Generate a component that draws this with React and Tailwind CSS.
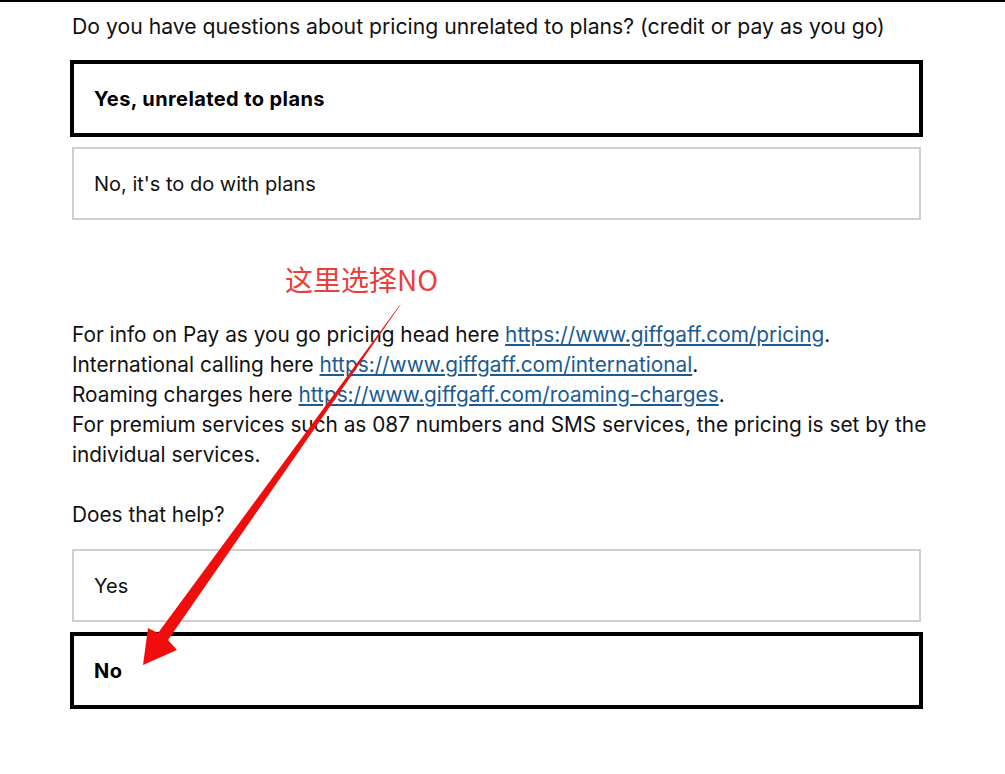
import React from "react";

const links = {
  pricing: "https://www.giffgaff.com/pricing",
  international: "https://www.giffgaff.com/international",
  roaming: "https://www.giffgaff.com/roaming-charges",
};

function Option({ label, selected }) {
  if (selected) {
    return (
      <button className="flex h-[77px] w-full items-center border-4 border-black bg-white px-5 text-left text-[20px] font-bold tracking-[0.4px] text-black">
        {label}
      </button>
    );
  }
  return (
    <button className="mx-[2px] my-[2px] flex h-[73px] w-[calc(100%-4px)] items-center border-2 border-[#cfcfcf] bg-white px-5 text-left text-[20px] text-[#111]">
      {label}
    </button>
  );
}

function Link({ href }) {
  return (
    <a href={href} className="text-[#1c5a94] underline underline-offset-2">
      {href}
    </a>
  );
}

function ArrowMark() {
  return (
    <svg
      className="pointer-events-none absolute left-0 top-0"
      width="1005"
      height="774"
      viewBox="0 0 1005 774"
    >
      <polygon
        points="401,304 399,306 158,633 148,628 143,665 177,650 168,640"
        fill="#f20d0d"
      />
    </svg>
  );
}

export default function App() {
  return (
    <div className="relative min-h-[774px] w-[1005px] bg-white font-['Inter',sans-serif] text-[#111]">
      <div className="h-[2px] bg-black" />

      <div className="w-[853px] pl-[70px] box-content">
        <h2 className="ml-[2px] mt-[9px] text-[21.2px] leading-[30px] font-normal whitespace-nowrap">
          Do you have questions about pricing unrelated to plans? (credit or pay as you go)
        </h2>

        <div className="mt-[19px] flex flex-col gap-2">
          <Option label="Yes, unrelated to plans" selected />
          <Option label="No, it's to do with plans" />
        </div>

        <p className="ml-[2px] mt-[98px] text-[20.8px] leading-[30px] whitespace-nowrap">
          For info on Pay as you go pricing head here <Link href={links.pricing} />.
          <br />
          International calling here <Link href={links.international} />.
          <br />
          Roaming charges here <Link href={links.roaming} />.
          <br />
          For premium services such as 087 numbers and SMS services, the pricing is set by the
          <br />
          individual services.
        </p>

        <p className="ml-[2px] mt-[30px] text-[20.8px] leading-[30px]">Does that help?</p>

        <div className="mt-[17px] flex flex-col gap-2">
          <Option label="Yes" />
          <Option label="No" selected />
        </div>
      </div>

      <span className="absolute left-[285px] top-[259px] font-['Noto_Sans_CJK_SC','Noto_Sans',sans-serif] text-[28px] leading-[40px] text-[#e8403a]">
        这里选择NO
      </span>

      <ArrowMark />
    </div>
  );
}
